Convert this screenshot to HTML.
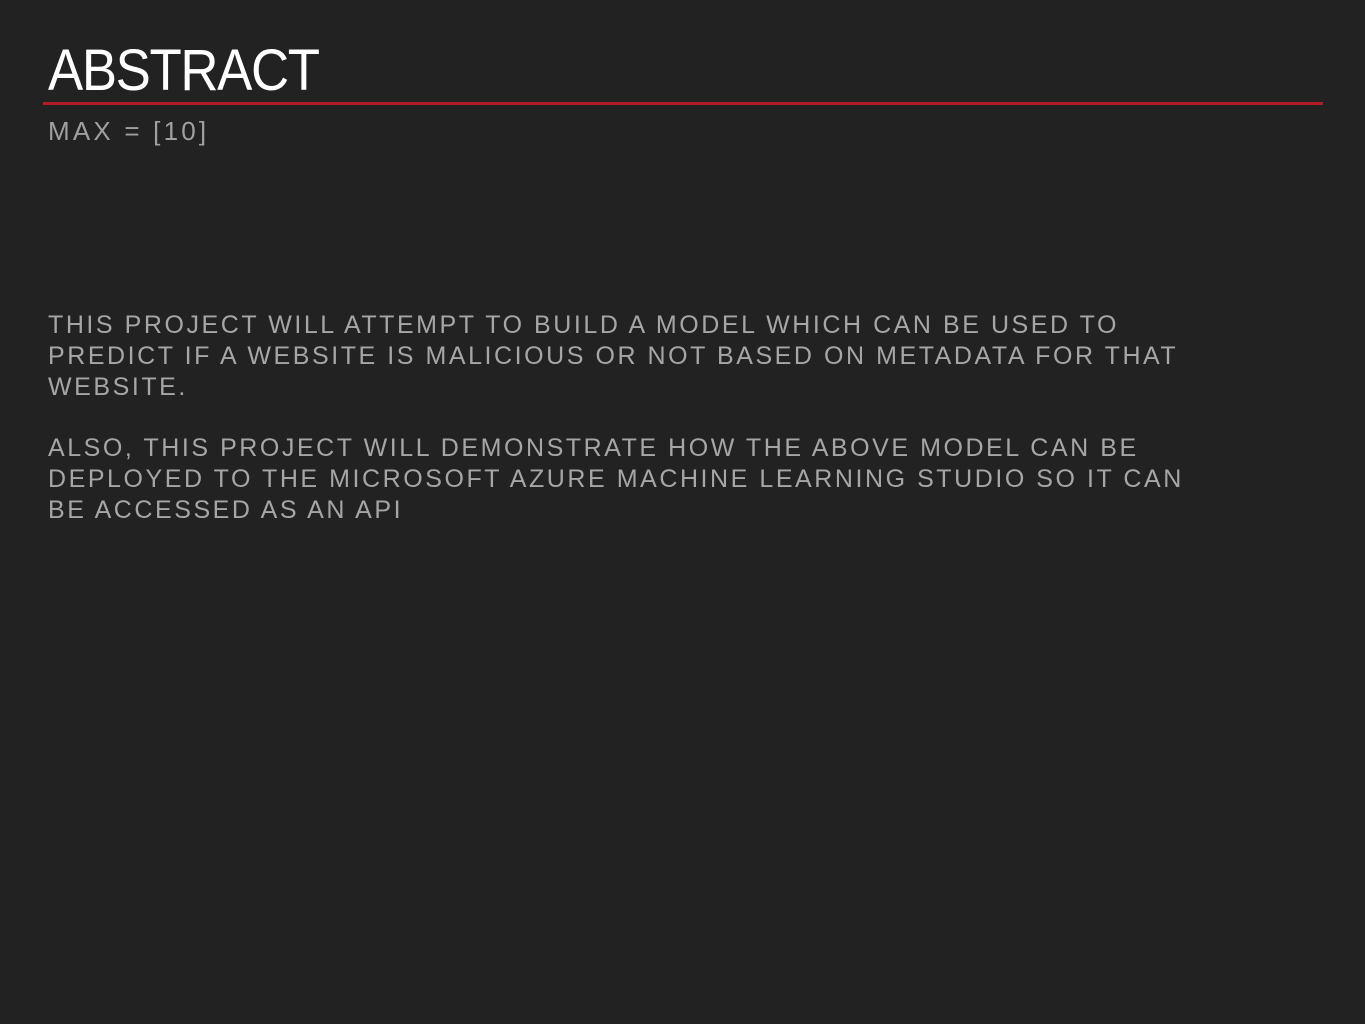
<!DOCTYPE html>
<html><head><meta charset="utf-8"><style>
html,body{margin:0;padding:0;background:#222222;width:1365px;height:1024px;overflow:hidden;font-family:"Liberation Sans",sans-serif;}
.t{position:absolute;left:48px;top:38px;font-size:58px;color:#fff;white-space:nowrap;letter-spacing:-1.5px;line-height:66px;transform:scaleX(0.91);transform-origin:left top;}
.rule{position:absolute;left:43px;top:102px;width:1280px;height:3px;background:#b01c2a;}
.m{position:absolute;left:48px;top:115px;font-size:26px;color:#a0a0a0;letter-spacing:3.2px;line-height:32px;white-space:nowrap;}
.p{position:absolute;left:48px;font-size:25px;color:#a6a6a6;line-height:31px;white-space:nowrap;letter-spacing:2.55px;}
</style></head><body>
<div class="t">ABSTRACT</div>
<div class="rule"></div>
<div class="m">MAX = [10]</div>
<div class="p" style="top:310px">THIS PROJECT WILL ATTEMPT TO BUILD A MODEL WHICH CAN BE USED TO<br>PREDICT IF A WEBSITE IS MALICIOUS OR NOT BASED ON METADATA FOR THAT<br>WEBSITE.</div>
<div class="p" style="top:433px">ALSO, THIS PROJECT WILL DEMONSTRATE HOW THE ABOVE MODEL CAN BE<br>DEPLOYED TO THE MICROSOFT AZURE MACHINE LEARNING STUDIO SO IT CAN<br>BE ACCESSED AS AN API</div>
</body></html>
